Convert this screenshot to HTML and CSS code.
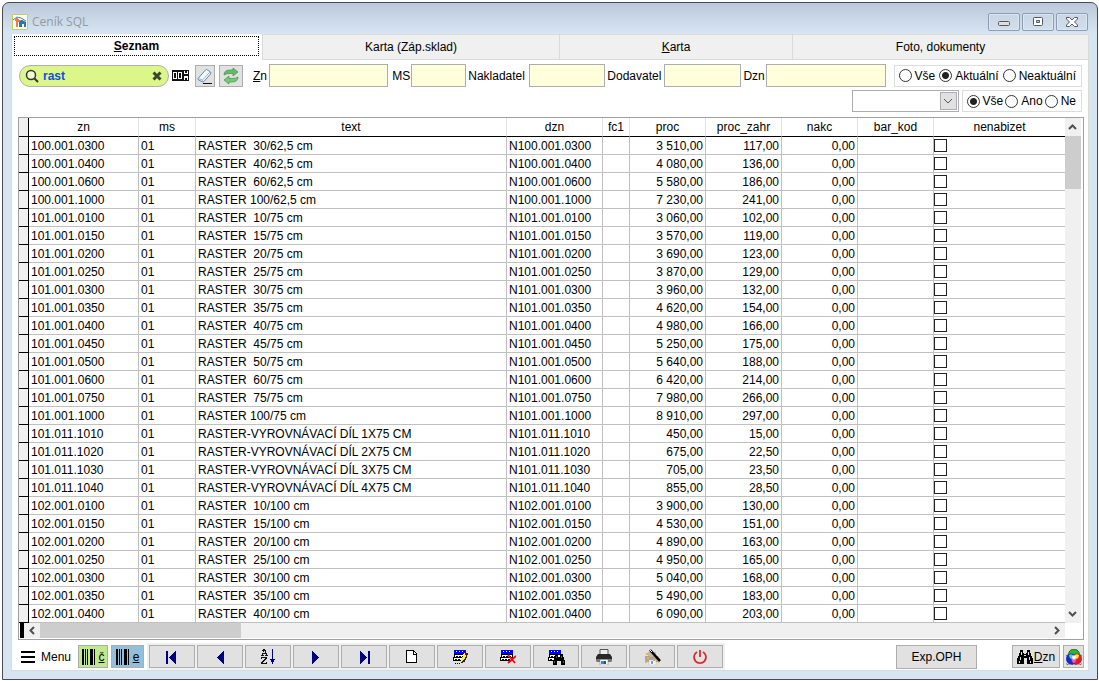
FILE: index.html
```html
<!DOCTYPE html>
<html lang="cs">
<head>
<meta charset="utf-8">
<title>Ceník SQL</title>
<link rel="stylesheet" href="styles.css">
</head>
<body>
<div class="window">
  <header class="titlebar">
    <svg class="app-icon" width="16" height="16" viewBox="0 0 16 16" aria-hidden="true"><path d="M.5.5h15v15H.5z" fill="#fff" stroke="#b9d65a"/><path d="M1 6l4-3 4 1 5 3" fill="none" stroke="#4c7f9e"/><path d="M3 6h4M5 4v9M5 7h5v2" fill="none" stroke="#f07a50" stroke-width="2"/><path d="M7 8l3-2 4 2v5h-2v-3h-2v3H7z" fill="#2878a8"/></svg>
    <h1 class="title">Ceník SQL</h1>
    <button class="win-btn" aria-label="Minimalizovat"><svg width="12" height="10" viewBox="0 0 12 10"><rect x=".5" y="4.500" width="11" height="4" rx="1" fill="#e4dfd2" stroke="#535666"/></svg></button>
    <button class="win-btn" aria-label="Obnovit"><svg width="12" height="10" viewBox="0 0 12 10"><rect x="1.500" y=".5" width="9" height="8" rx="1" fill="#fff" stroke="#535666"/><path d="M4.500 3.500h3v2h-3z" fill="#c2cfdf" stroke="#535666"/></svg></button>
    <button class="win-btn" aria-label="Zavřít"><svg width="12" height="10" viewBox="0 0 12 10"><path d="M.5.5h3L6 3 8.500.5h3v1.500L8.500 5l3 3v1.500h-3L6 7 3.500 9.500h-3V8l3-3-3-3z" fill="#fff" stroke="#535666"/></svg></button>
  </header>

  <main class="content">
    <div class="tabs" role="tablist">
      <button class="tab tab-active" role="tab" aria-selected="true"><span class="tab-focus"><u>S</u>eznam</span></button>
      <button class="tab" role="tab">Karta (Záp.sklad)</button>
      <button class="tab" role="tab"><u>K</u>arta</button>
      <button class="tab" role="tab">Foto, dokumenty</button>
    </div>

    <div class="filters">
      <div class="search">
        <svg width="14" height="14" viewBox="0 0 14 14" aria-hidden="true"><circle cx="6" cy="6" r="4.500" fill="#fff" fill-opacity=".6" stroke="#333" stroke-width="1.500"/><path d="M9.500 9.500l3.500 3.500" stroke="#333" stroke-width="2"/></svg>
        <input class="search-input" type="text" value="rast" aria-label="Hledat">
        <button class="clear" aria-label="Smazat hledání"><svg width="10" height="10" viewBox="0 0 10 10"><path d="M1.500 1.500l7 7M8.500 1.500l-7 7" stroke="#3c4430" stroke-width="3"/></svg></button>
      </div>
      <svg class="counter" width="17" height="11" viewBox="0 0 17 11" shape-rendering="crispEdges" aria-hidden="true"><path d="M0 0h17v11H0z" fill="#111"/><path d="M1 2h4v7H1zM6 2h4v7H6zM12 1h1v2h2V1h1v3h-4zM12 6h4v4h-1V8h-2v2h-1z" fill="#fff"/><path d="M2 3h2v5H2zM7 3h2v5H7z" fill="#111"/></svg>
      <button class="tool tool-erase" aria-label="Vymazat filtr"><svg width="18" height="18" viewBox="0 0 18 18"><path d="M2 11.500L9.500 3q1-1 2 0l3 2q1 1 0 2L8 14.500q-1 1-2 0l-3.500-1.500z" fill="#f4f8ff" stroke="#6688ad"/><path d="M2.500 11.500l4 1.500 7.500-8M6.500 13v2" fill="none" stroke="#9bb5d4"/><path d="M7 16.500h9" stroke="#111"/></svg></button>
      <button class="tool tool-refresh" aria-label="Obnovit data"><svg width="18" height="18" viewBox="0 0 18 18"><path d="M2 8q0-5 6-5h3V1l5 4-5 4V6.500H8Q4 6.500 2 8z" fill="#69b969" stroke="#3d944a" stroke-width=".7"/><path d="M16 10q0 5-6 5H7v2l-5-4 5-4v2.500h3q4 0 6-1.500z" fill="#7bc778" stroke="#3d944a" stroke-width=".7"/></svg></button>
      <div class="fields">
        <label for="zn"><u>Z</u>n</label><input class="field" id="zn" type="text">
        <label class="label-wide" for="ms">MS</label><input class="field" id="ms" type="text">
        <label class="label-near" for="nak">Nakladatel</label><input class="field" id="nak" type="text">
        <label class="label-near" for="dod">Dodavatel</label><input class="field" id="dod" type="text">
        <label class="label-near" for="dzn">Dzn</label><input class="field" id="dzn" type="text">
      </div>
      <div class="radios" role="radiogroup" aria-label="Aktuálnost">
        <label class="radio"><input type="radio" name="akt">Vše</label>
        <label class="radio"><input type="radio" name="akt" checked>Aktuální</label>
        <label class="radio"><input type="radio" name="akt">Neaktuální</label>
      </div>
    </div>
    <div class="filters filters-second">
      <div class="select-wrap">
        <select class="select" aria-label="Skupina"><option></option></select>
        <span class="select-arrow"><svg width="10" height="6" viewBox="0 0 10 6"><path d="M1 1l4 4 4-4" fill="none" stroke="#555"/></svg></span>
      </div>
      <div class="radios radios-tight" role="radiogroup" aria-label="Nenabízet">
        <label class="radio"><input type="radio" name="nen" checked>Vše</label>
        <label class="radio"><input type="radio" name="nen">Ano</label>
        <label class="radio"><input type="radio" name="nen">Ne</label>
      </div>
    </div>

    <section class="grid">
      <div class="grid-main">
        <table class="table">
          <colgroup><col class="c-sel"><col class="c-zn"><col class="c-ms"><col><col class="c-dzn"><col class="c-fc"><col class="c-num"><col class="c-num"><col class="c-num"><col class="c-num"><col class="c-nen"></colgroup>
          <thead><tr><th></th><th>zn</th><th>ms</th><th>text</th><th>dzn</th><th>fc1</th><th>proc</th><th>proc_zahr</th><th>nakc</th><th>bar_kod</th><th>nenabizet</th></tr></thead>
          <tbody>
<tr><td></td><td>100.001.0300</td><td>01</td><td>RASTER  30/62,5 cm</td><td>N100.001.0300</td><td></td><td>3 510,00</td><td>117,00</td><td>0,00</td><td></td><td><input type="checkbox" aria-label="nenabizet"></td></tr>
<tr><td></td><td>100.001.0400</td><td>01</td><td>RASTER  40/62,5 cm</td><td>N100.001.0400</td><td></td><td>4 080,00</td><td>136,00</td><td>0,00</td><td></td><td><input type="checkbox" aria-label="nenabizet"></td></tr>
<tr><td></td><td>100.001.0600</td><td>01</td><td>RASTER  60/62,5 cm</td><td>N100.001.0600</td><td></td><td>5 580,00</td><td>186,00</td><td>0,00</td><td></td><td><input type="checkbox" aria-label="nenabizet"></td></tr>
<tr><td></td><td>100.001.1000</td><td>01</td><td>RASTER 100/62,5 cm</td><td>N100.001.1000</td><td></td><td>7 230,00</td><td>241,00</td><td>0,00</td><td></td><td><input type="checkbox" aria-label="nenabizet"></td></tr>
<tr><td></td><td>101.001.0100</td><td>01</td><td>RASTER  10/75 cm</td><td>N101.001.0100</td><td></td><td>3 060,00</td><td>102,00</td><td>0,00</td><td></td><td><input type="checkbox" aria-label="nenabizet"></td></tr>
<tr><td></td><td>101.001.0150</td><td>01</td><td>RASTER  15/75 cm</td><td>N101.001.0150</td><td></td><td>3 570,00</td><td>119,00</td><td>0,00</td><td></td><td><input type="checkbox" aria-label="nenabizet"></td></tr>
<tr><td></td><td>101.001.0200</td><td>01</td><td>RASTER  20/75 cm</td><td>N101.001.0200</td><td></td><td>3 690,00</td><td>123,00</td><td>0,00</td><td></td><td><input type="checkbox" aria-label="nenabizet"></td></tr>
<tr><td></td><td>101.001.0250</td><td>01</td><td>RASTER  25/75 cm</td><td>N101.001.0250</td><td></td><td>3 870,00</td><td>129,00</td><td>0,00</td><td></td><td><input type="checkbox" aria-label="nenabizet"></td></tr>
<tr><td></td><td>101.001.0300</td><td>01</td><td>RASTER  30/75 cm</td><td>N101.001.0300</td><td></td><td>3 960,00</td><td>132,00</td><td>0,00</td><td></td><td><input type="checkbox" aria-label="nenabizet"></td></tr>
<tr><td></td><td>101.001.0350</td><td>01</td><td>RASTER  35/75 cm</td><td>N101.001.0350</td><td></td><td>4 620,00</td><td>154,00</td><td>0,00</td><td></td><td><input type="checkbox" aria-label="nenabizet"></td></tr>
<tr><td></td><td>101.001.0400</td><td>01</td><td>RASTER  40/75 cm</td><td>N101.001.0400</td><td></td><td>4 980,00</td><td>166,00</td><td>0,00</td><td></td><td><input type="checkbox" aria-label="nenabizet"></td></tr>
<tr><td></td><td>101.001.0450</td><td>01</td><td>RASTER  45/75 cm</td><td>N101.001.0450</td><td></td><td>5 250,00</td><td>175,00</td><td>0,00</td><td></td><td><input type="checkbox" aria-label="nenabizet"></td></tr>
<tr><td></td><td>101.001.0500</td><td>01</td><td>RASTER  50/75 cm</td><td>N101.001.0500</td><td></td><td>5 640,00</td><td>188,00</td><td>0,00</td><td></td><td><input type="checkbox" aria-label="nenabizet"></td></tr>
<tr><td></td><td>101.001.0600</td><td>01</td><td>RASTER  60/75 cm</td><td>N101.001.0600</td><td></td><td>6 420,00</td><td>214,00</td><td>0,00</td><td></td><td><input type="checkbox" aria-label="nenabizet"></td></tr>
<tr><td></td><td>101.001.0750</td><td>01</td><td>RASTER  75/75 cm</td><td>N101.001.0750</td><td></td><td>7 980,00</td><td>266,00</td><td>0,00</td><td></td><td><input type="checkbox" aria-label="nenabizet"></td></tr>
<tr><td></td><td>101.001.1000</td><td>01</td><td>RASTER 100/75 cm</td><td>N101.001.1000</td><td></td><td>8 910,00</td><td>297,00</td><td>0,00</td><td></td><td><input type="checkbox" aria-label="nenabizet"></td></tr>
<tr><td></td><td>101.011.1010</td><td>01</td><td>RASTER-VYROVNÁVACÍ DÍL 1X75 CM</td><td>N101.011.1010</td><td></td><td>450,00</td><td>15,00</td><td>0,00</td><td></td><td><input type="checkbox" aria-label="nenabizet"></td></tr>
<tr><td></td><td>101.011.1020</td><td>01</td><td>RASTER-VYROVNÁVACÍ DÍL 2X75 CM</td><td>N101.011.1020</td><td></td><td>675,00</td><td>22,50</td><td>0,00</td><td></td><td><input type="checkbox" aria-label="nenabizet"></td></tr>
<tr><td></td><td>101.011.1030</td><td>01</td><td>RASTER-VYROVNÁVACÍ DÍL 3X75 CM</td><td>N101.011.1030</td><td></td><td>705,00</td><td>23,50</td><td>0,00</td><td></td><td><input type="checkbox" aria-label="nenabizet"></td></tr>
<tr><td></td><td>101.011.1040</td><td>01</td><td>RASTER-VYROVNÁVACÍ DÍL 4X75 CM</td><td>N101.011.1040</td><td></td><td>855,00</td><td>28,50</td><td>0,00</td><td></td><td><input type="checkbox" aria-label="nenabizet"></td></tr>
<tr><td></td><td>102.001.0100</td><td>01</td><td>RASTER  10/100 cm</td><td>N102.001.0100</td><td></td><td>3 900,00</td><td>130,00</td><td>0,00</td><td></td><td><input type="checkbox" aria-label="nenabizet"></td></tr>
<tr><td></td><td>102.001.0150</td><td>01</td><td>RASTER  15/100 cm</td><td>N102.001.0150</td><td></td><td>4 530,00</td><td>151,00</td><td>0,00</td><td></td><td><input type="checkbox" aria-label="nenabizet"></td></tr>
<tr><td></td><td>102.001.0200</td><td>01</td><td>RASTER  20/100 cm</td><td>N102.001.0200</td><td></td><td>4 890,00</td><td>163,00</td><td>0,00</td><td></td><td><input type="checkbox" aria-label="nenabizet"></td></tr>
<tr><td></td><td>102.001.0250</td><td>01</td><td>RASTER  25/100 cm</td><td>N102.001.0250</td><td></td><td>4 950,00</td><td>165,00</td><td>0,00</td><td></td><td><input type="checkbox" aria-label="nenabizet"></td></tr>
<tr><td></td><td>102.001.0300</td><td>01</td><td>RASTER  30/100 cm</td><td>N102.001.0300</td><td></td><td>5 040,00</td><td>168,00</td><td>0,00</td><td></td><td><input type="checkbox" aria-label="nenabizet"></td></tr>
<tr><td></td><td>102.001.0350</td><td>01</td><td>RASTER  35/100 cm</td><td>N102.001.0350</td><td></td><td>5 490,00</td><td>183,00</td><td>0,00</td><td></td><td><input type="checkbox" aria-label="nenabizet"></td></tr>
<tr><td></td><td>102.001.0400</td><td>01</td><td>RASTER  40/100 cm</td><td>N102.001.0400</td><td></td><td>6 090,00</td><td>203,00</td><td>0,00</td><td></td><td><input type="checkbox" aria-label="nenabizet"></td></tr>
          </tbody>
        </table>
        <div class="vscroll">
          <svg class="arrow-v" width="9" height="6" viewBox="0 0 9 6"><path d="M1 5l3.500-3.500L8 5" fill="none" stroke="#505050" stroke-width="2"/></svg>
          <div class="thumb-v"></div>
          <svg class="arrow-v arrow-end" width="9" height="6" viewBox="0 0 9 6"><path d="M1 1l3.500 3.500L8 1" fill="none" stroke="#505050" stroke-width="2"/></svg>
        </div>
      </div>
      <div class="hscroll">
        <svg class="arrow-h" width="6" height="9" viewBox="0 0 6 9"><path d="M5 1L1.500 4.500 5 8" fill="none" stroke="#505050" stroke-width="2"/></svg>
        <div class="thumb-h"></div>
        <svg class="arrow-h arrow-end" width="6" height="9" viewBox="0 0 6 9"><path d="M1 1l3.500 3.500L1 8" fill="none" stroke="#505050" stroke-width="2"/></svg>
      </div>
    </section>

    <footer class="toolbar">
      <button class="menu"><svg width="14" height="12" viewBox="0 0 14 12" shape-rendering="crispEdges"><path d="M0 1h14M0 6h14M0 11h14" stroke="#000" stroke-width="2"/></svg>Menu</button>
      <button class="code code-green"><svg width="14" height="16" viewBox="0 0 14 16" shape-rendering="crispEdges"><path d="M0 0h2v16H0zM3 0h1v16H3zM5 0h1v16H5zM8 0h3v16H8zM12 0h1v16h-1z"/></svg><u>č</u></button>
      <button class="code code-blue"><svg width="14" height="16" viewBox="0 0 14 16" shape-rendering="crispEdges"><path d="M0 0h2v16H0zM3 0h1v16H3zM5 0h1v16H5zM8 0h3v16H8zM12 0h1v16h-1z"/></svg><u>e</u></button>
      <div class="nav">
        <button class="btn" aria-label="První"><svg width="16" height="16" viewBox="0 0 16 16" shape-rendering="crispEdges"><path d="M2 2h2v13H2zM12 1.500v14L5 8.500z" fill="#000080"/></svg></button>
        <button class="btn" aria-label="Předchozí"><svg width="16" height="16" viewBox="0 0 16 16" shape-rendering="crispEdges"><path d="M12 1.500v14L5 8.500z" fill="#000080"/></svg></button>
        <button class="btn" aria-label="Seřadit"><svg width="16" height="16" viewBox="0 0 16 16" shape-rendering="crispEdges"><path d="M3 0h2v1h1v3h1v2h1v1H5V6h1V5H3v1h1v1H1V6h1V4h1V2H2V1h1zM3 4h2V2H4v1H3zM1 8h6v2H6v1H5v1H4v1H3v1h3v-1h1v2H1v-2h1v-1h1v-1h1v-1h1V9H2v1H1z" fill="#111" fill-rule="evenodd"/><path d="M12 0h1v10h2v1h-1v2h-1v2h-1v-2h-1v-2h-1v-1h2z" fill="#000080"/></svg></button>
        <button class="btn" aria-label="Další"><svg width="16" height="16" viewBox="0 0 16 16" shape-rendering="crispEdges"><path d="M4 1.500v14l7-7z" fill="#000080"/></svg></button>
        <button class="btn" aria-label="Poslední"><svg width="16" height="16" viewBox="0 0 16 16" shape-rendering="crispEdges"><path d="M4 1.500v14l7-7zM12 2h2v13h-2z" fill="#000080"/></svg></button>
        <button class="btn" aria-label="Nový"><svg width="16" height="16" viewBox="0 0 16 16" shape-rendering="crispEdges"><path d="M2.500 1.500h7l3 3v9h-10z" fill="#fff" stroke="#000"/><path d="M9.500 2v3h3" fill="none" stroke="#000"/></svg></button>
        <button class="btn" aria-label="Upravit"><svg width="16" height="16" viewBox="0 0 16 16" shape-rendering="crispEdges"><path d="M2 1h12v4H2z" fill="#00f"/><path d="M4 2.500h9" stroke="#fff" stroke-dasharray="1 2"/><path d="M2.500 5.500h10v3h-10zM1.500 8.500h10v3h-10z" fill="#fff" stroke="#000"/><path d="M4 7.500h8M3 10.500h7" stroke="#000" stroke-dasharray="2 1"/><path d="M12 4h2v2h-1v3h-1v2h-1v2H9v-3h1V8h1V5h1z" fill="#ff0"/><path d="M14 5v3h-1v2h-1v2h-2v1H9" fill="none" stroke="#222"/><path d="M13 4h3v2h-3z" fill="#800000"/><path d="M3 14h1v1H3zM5 14h1v1H5zM7 14h1v1H7z"/></svg></button>
        <button class="btn" aria-label="Smazat"><svg width="16" height="16" viewBox="0 0 16 16"><g shape-rendering="crispEdges"><path d="M1 1h12v4H1z" fill="#00f"/><path d="M3 2.500h9" stroke="#fff" stroke-dasharray="1 2"/><path d="M1.500 5.500h11v3h-11zM.5 8.500h11v3H.5z" fill="#fff" stroke="#000"/><path d="M3 7.500h8M2 10.500h8" stroke="#000" stroke-dasharray="2 1"/></g><path d="M8 6l7 8M16 7l-8 7" stroke="#f00" stroke-width="1.800"/></svg></button>
        <button class="btn" aria-label="Hledat"><svg width="17" height="16" viewBox="0 0 17 16" shape-rendering="crispEdges"><path d="M1 1h12v4H1z" fill="#00f"/><path d="M3 2.500h9" stroke="#fff" stroke-dasharray="1 2"/><path d="M1.500 5.500h11v3h-11zM.5 8.500h9v3H.5z" fill="#fff" stroke="#000"/><path d="M3 7.500h4M2 10.500h3" stroke="#000" stroke-dasharray="2 1"/><path d="M7 5h3v3h2V5h3v3h1v3h1v5h-4v-4h-4v4H5v-5h1V8h1z"/><path d="M8 7h1v2H8zM13 7h1v2h-1zM6 12h1v2H6zM15 12h1v2h-1z" fill="#555"/></svg></button>
        <button class="btn" aria-label="Tisk"><svg width="16" height="16" viewBox="0 0 16 16"><path d="M4 .5h8V6H4z" fill="#eee" stroke="#555"/><path d="M2 5h12l2 3v4H0V8z" fill="#292929"/><path d="M0 10h16v2l-1 1H1l-1-1z" fill="#777"/><path d="M4 10.500h8V16H4z" fill="#fff" stroke="#777" stroke-width=".5"/><path d="M5 12h3v3H5z" fill="#3487e5"/><path d="M8 12h2v3H8z" fill="#1b5c55"/></svg></button>
        <button class="btn" aria-label="Návrh tisku"><svg width="17" height="16" viewBox="0 0 17 16"><path d="M4 3h8v5H4z" fill="#bbb"/><path d="M1 7h13l2 3v3H1z" fill="#a7a7a7"/><path d="M5 11h7v5H5z" fill="#fff" stroke="#aaa" stroke-width=".5"/><path d="M2 4h2v2H2zM7 2h2v2H7zM3 8h2v2H3zM6 6h2v2H6zM1 12h2v2H1zM9 10h2v2H9zM14 12h1v2h-1z" fill="#f4ae3f"/><path d="M7 12h2v3H7z" fill="#65aaf0"/><path d="M6 1l10 11" stroke="#000" stroke-width="2.500"/><path d="M6 1l2 2" stroke="#fff"/></svg></button>
        <button class="btn" aria-label="Konec"><svg width="16" height="16" viewBox="0 0 16 16"><path d="M5 3a6 6 0 1 0 6 0M8 1v7" fill="none" stroke="#dc2c32" stroke-width="1.800"/></svg></button>
      </div>
      <button class="export">Exp.OPH</button>
      <button class="find"><svg width="16" height="14" viewBox="0 0 16 14" shape-rendering="crispEdges"><path d="M3 0h3v3h1v1h2V3h1V0h3v3h1v3h1v2h1v6h-6V8H7v6H0V8h1V6h1V3h1z"/><path d="M4 2h1v3H4zM11 2h1v3h-1zM3 7h1v3H3zM12 7h1v3h-1zM2 11h1v2H2zM13 11h1v2h-1zM7 5h2v1H7z" fill="#ddd"/></svg><span><u>D</u>zn</span></button>
      <button class="colors" aria-label="Barvy"><svg width="16" height="16" viewBox="0 0 16 16"><circle cx="8" cy="5.500" r="5.500" fill="#26b82e"/><circle cx="5.500" cy="10" r="5.500" fill="#1a2cc0"/><circle cx="10.500" cy="10" r="5.500" fill="#d81f28"/><path d="M3 6Q6 4 8 7L5.500 10Q3 9 3 6z" fill="#38d8e8"/><path d="M13 6Q10 4 8 7l2.500 3Q13 9 13 6z" fill="#f2e34a"/><path d="M8 14.500q-3-3-2-5h4q1 2-2 5z" fill="#e65adc"/><circle cx="8" cy="8.500" r="2" fill="#fff"/><path d="M8 0a5.500 5.500 0 0 1 5.500 5.500A5.500 5.500 0 1 1 8 14.500 5.500 5.500 0 1 1 2.500 5.500 5.500 5.500 0 0 1 8 0z" fill="none" stroke="#222" stroke-opacity=".6"/></svg></button>
    </footer>
  </main>
</div>
</body>
</html>
```
FILE: styles.css
```css
* { box-sizing: border-box; }

body {
  margin: 0;
  padding: 2px 1px 1px 2px;
  background: #fff;
  color: #000;
  font: 12px/16px "Liberation Sans", Arial, sans-serif;
}

button, input, select {
  margin: 0;
  padding: 0;
  font: inherit;
  color: inherit;
}

button {
  display: flex;
  align-items: center;
  justify-content: center;
}

svg { display: block; flex: none; }

.window {
  min-width: 960px;
  padding: 0 8px 8px;
  border: 1px solid #4a4a52;
  border-radius: 7px 7px 0 0;
  background: linear-gradient(#bac8d9, #d7e4f2 30px);
}

.titlebar {
  display: flex;
  align-items: center;
  gap: 2px;
  height: 31px;
  padding: 6px 1px 0;
}

.title {
  flex: 1;
  margin: 0 0 0 2px;
  color: #929aa3;
  font: 12px/16px "Open Sans", sans-serif;
}

.win-btn {
  width: 32px;
  height: 18px;
  border: 1px solid #8d9bb3;
  border-radius: 2px;
  background: linear-gradient(#c8d5e4, #d2dfed);
  box-shadow: inset 0 0 0 1px #dde7f2;
}

.content {
  border: 1px solid #dadada;
  border-top: 0;
  background: #fff;
}

.tabs {
  display: grid;
  grid-template-columns: 251fr 297fr 233fr 295fr;
}

.tab {
  height: 26px;
  border: 1px solid #dadada;
  border-left-width: 0;
  background: #f0f0f0;
}

.tab:last-child { border-right: 0; }

.tab-active {
  align-items: flex-start;
  padding: 2px 3px 0 2px;
  border-top: 0;
  border-bottom: 0;
  background: #fff;
  font-weight: bold;
}

.tab-focus {
  flex: 1;
  height: 20px;
  border: 1px dotted #000;
  line-height: 19px;
}

.filters {
  display: flex;
  align-items: center;
  padding: 4px 6px 0 7px;
}

.filters-second {
  justify-content: flex-end;
  gap: 3px;
  padding-top: 3px;
}

.search {
  display: flex;
  align-items: center;
  width: 150px;
  height: 22px;
  padding: 0 6px 0 5px;
  border: 1px solid #b0b0b0;
  border-radius: 11px;
  background: #dcf689;
}

.search-input {
  flex: 1;
  min-width: 0;
  margin-left: 4px;
  border: 0;
  outline: 0;
  background: transparent;
  color: #0a50dc;
  font-weight: bold;
}

.clear { border: 0; background: none; }

.counter { margin-left: 3px; }

.tool {
  height: 22px;
  border: 1px solid #adadad;
  background: #e1e1e1;
}

.tool-erase { width: 20px; margin-left: 6px; }
.tool-refresh { width: 24px; margin-left: 4px; }

.fields {
  display: grid;
  flex: 1;
  grid-template-columns: 16px 119fr 23px 55fr 63px 76fr 59px 77fr 25px 119fr;
  align-items: center;
  margin: 0 8px 0 10px;
}

.label-wide { padding-left: 4px; }
.label-near { padding-left: 2px; }

.field {
  width: 100%;
  height: 23px;
  border: 1px solid #abadb3;
  border-radius: 0;
  background: #ffffdc;
}

.radios {
  display: flex;
  align-items: center;
  gap: 4px;
  height: 22px;
  padding: 0 5px 0 4px;
  border: 1px solid #dcdcdc;
}

.radios-tight { gap: 2px; }

.radio {
  display: flex;
  align-items: center;
  gap: 3px;
}

.radio input {
  width: 13px;
  height: 13px;
  border: 1px solid #333;
  border-radius: 50%;
  background: #fff;
  appearance: none;
}

.radio input:checked {
  background: radial-gradient(circle, #222 3px, #fff 4px);
}

.select-wrap {
  display: grid;
  width: 107px;
}

.select, .select-arrow { grid-area: 1 / 1; }

.select {
  height: 22px;
  border: 1px solid #abadb3;
  border-radius: 0;
  background: #fff;
  appearance: none;
}

.select-arrow {
  display: flex;
  align-items: center;
  justify-content: center;
  justify-self: end;
  width: 17px;
  height: 18px;
  margin: 2px;
  border: 1px solid #adadad;
  background: #e1e1e1;
  pointer-events: none;
}

.grid {
  margin: 5px 4px 0 6px;
  border: 1px solid #a0a0a0;
}

.grid-main { display: flex; padding-right: 2px; }

.table {
  flex: 1;
  width: 100%;
  border-spacing: 0;
  table-layout: fixed;
}

.c-sel { width: 10px; }
.c-zn { width: 110px; }
.c-ms { width: 57px; }
.c-dzn { width: 96px; }
.c-fc { width: 27px; }
.c-num { width: 76px; }
.c-nen { width: 131px; }

.table th {
  height: 19px;
  padding: 0;
  border-right: 1px solid #e2e2e2;
  border-bottom: 1px solid #000;
  font-weight: normal;
  line-height: 18px;
}

.table td {
  height: 18px;
  padding: 1px 2px 0;
  border-right: 1px solid #c0c0c0;
  border-bottom: 1px solid #c0c0c0;
  line-height: 16px;
  white-space: pre;
}

.table th:first-child,
.table td:first-child {
  border-right-color: #000;
  border-bottom-color: #000;
  background: #f0f0f0;
}

.table th:last-child,
.table td:last-child { border-right: 0; }

.table td:nth-child(n + 7):nth-child(-n + 9) { text-align: right; }

.table td:last-child { padding: 0; }

.table input {
  display: block;
  width: 13px;
  height: 13px;
  border: 1px solid #222;
  background: #fff;
  appearance: none;
}

.vscroll {
  display: flex;
  flex-direction: column;
  width: 16px;
  background: #f0f0f0;
}

.arrow-v { margin: 6px 3px; }
.thumb-v { height: 53px; background: #cdcdcd; }

.hscroll {
  display: flex;
  align-items: center;
  height: 15px;
  margin: 0 18px 1px 1px;
  border-left: 4px solid #000;
  background: #f0f0f0;
}

.arrow-h { margin: 0 5px; }
.thumb-h { width: 201px; height: 15px; background: #cdcdcd; }

.vscroll .arrow-end { margin-top: auto; }
.hscroll .arrow-end { margin-left: auto; }

.toolbar {
  display: flex;
  align-items: center;
  gap: 3px;
  padding: 3px 4px 0 9px;
}

.menu {
  gap: 6px;
  width: 54px;
  justify-content: flex-start;
  border: 0;
  background: none;
}

.code, .btn, .export, .find, .colors {
  height: 23px;
  border: 1px solid #adadad;
  background: #e1e1e1;
}

.code { gap: 3px; width: 30px; }
.code-green { background: #bdea8c; }
.code-blue { width: 33px; background: #92bfd9; }

.nav {
  display: flex;
  gap: 2px;
  padding: 2px;
  background: #f0f0f0;
}

.btn { width: 46px; }

.export { width: 81px; height: 24px; margin-left: auto; }
.find { gap: 1px; width: 48px; margin-left: 32px; }
.colors { width: 21px; }
```
